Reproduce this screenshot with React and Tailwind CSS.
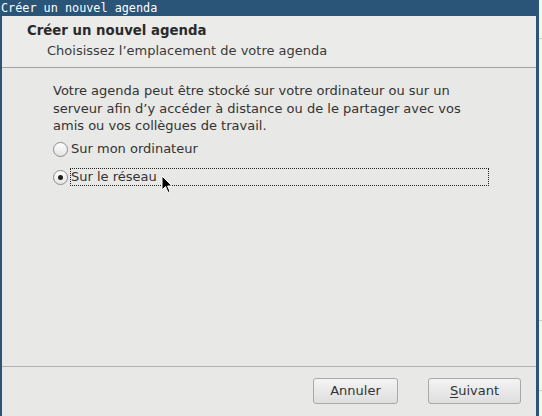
// App.jsx — "Créer un nouvel agenda" wizard dialog

function Radio({ checked }) {
  return (
    <span className="relative flex h-[15px] w-[15px] shrink-0 items-center justify-center rounded-full border border-[#8c8c8c] bg-gradient-to-b from-[#ffffff] to-[#e4e4e4]">
      {checked && <span className="h-[5px] w-[5px] rounded-full bg-[#1e1e1e]" />}
    </span>
  )
}

function Cursor() {
  return (
    <svg width="12" height="19" viewBox="0 0 12 19" className="absolute left-[161px] top-[175px]">
      <path d="M1 1 L1 15 L4.5 11.5 L7 17.5 L9 16.5 L6.6 11 L11 11 Z" fill="#000" stroke="#fff" strokeWidth="1" strokeLinejoin="round" />
    </svg>
  )
}

export default function App() {
  return (
    <div className="relative flex h-[416px] w-[542px] overflow-hidden bg-[#f1f7ea]" style={{ fontFamily: '"DejaVu Sans", Verdana, sans-serif' }}>
      {/* Window */}
      <div className="flex w-[539px] flex-col bg-[#2a5478]">
        <div className="h-[16px] pl-[1px] text-[11.8px] leading-[16px] text-white" style={{ fontFamily: '"DejaVu Sans Mono", monospace' }}>
          Créer un nouvel agenda
        </div>

        <div className="ml-[2px] mr-[3px] flex flex-1 flex-col bg-[#e8e8e6] text-[#2e2e2e]">
          {/* Header */}
          <div className="h-[51px] bg-[#ebebea] pl-[25px] pt-[6px]">
            <p className="text-[13.3px] font-bold leading-[18px] text-[#2a2a2a]">Créer un nouvel agenda</p>
            <p className="ml-[20px] mt-[2px] text-[13px] leading-[17px] text-[#3a3a3a]">Choisissez l’emplacement de votre agenda</p>
          </div>
          <div className="h-px bg-[#a3a3a3]" />

          {/* Body */}
          <div className="flex-1 pl-[51px] pt-[14px] text-[13px] text-[#333]">
            <p className="h-[58px] w-[425px] leading-[17.5px]">
              Votre agenda peut être stocké sur votre ordinateur ou sur un serveur afin d’y accéder à distance ou de le partager avec vos amis ou vos collègues de travail.
            </p>
            <div className="flex flex-col gap-[10px]">
              <div className="flex h-[18px] items-center">
                <Radio />
                <span className="ml-[2px] w-[419px] pl-[1px] leading-[18px]">Sur mon ordinateur</span>
              </div>
              <div className="flex h-[18px] items-center">
                <Radio checked />
                <span className="ml-[2px] w-[419px] border border-dotted border-[#222] leading-[16px]">Sur le réseau</span>
              </div>
            </div>
          </div>

          <div className="h-px bg-[#b0b0b0]" />

          {/* Buttons */}
          <div className="flex h-[49px] justify-end gap-[30px] pr-[15px] pt-[11px] text-[13px]">
            <button className="h-[26px] w-[85px] rounded-[3px] border border-[#a9a9a9] bg-gradient-to-b from-[#f4f4f4] to-[#dedede] text-[#333]">
              Annuler
            </button>
            <button className="h-[26px] w-[93px] rounded-[3px] border border-[#a9a9a9] bg-gradient-to-b from-[#f4f4f4] to-[#dedede] text-[#333]">
              <span className="underline underline-offset-2">S</span>uivant
            </button>
          </div>
        </div>
      </div>

      {/* Desktop strip on the right */}
      <div className="flex flex-1 flex-col">
        <div className="h-[38px]" />
        <div className="h-px bg-[#c8cfc2]" />
        <div className="h-[281px]" />
        <div className="h-px bg-[#c8cfc2]" />
        <div className="h-[69px]" />
        <div className="h-px bg-[#c8cfc2]" />
      </div>

      <Cursor />
    </div>
  )
}
